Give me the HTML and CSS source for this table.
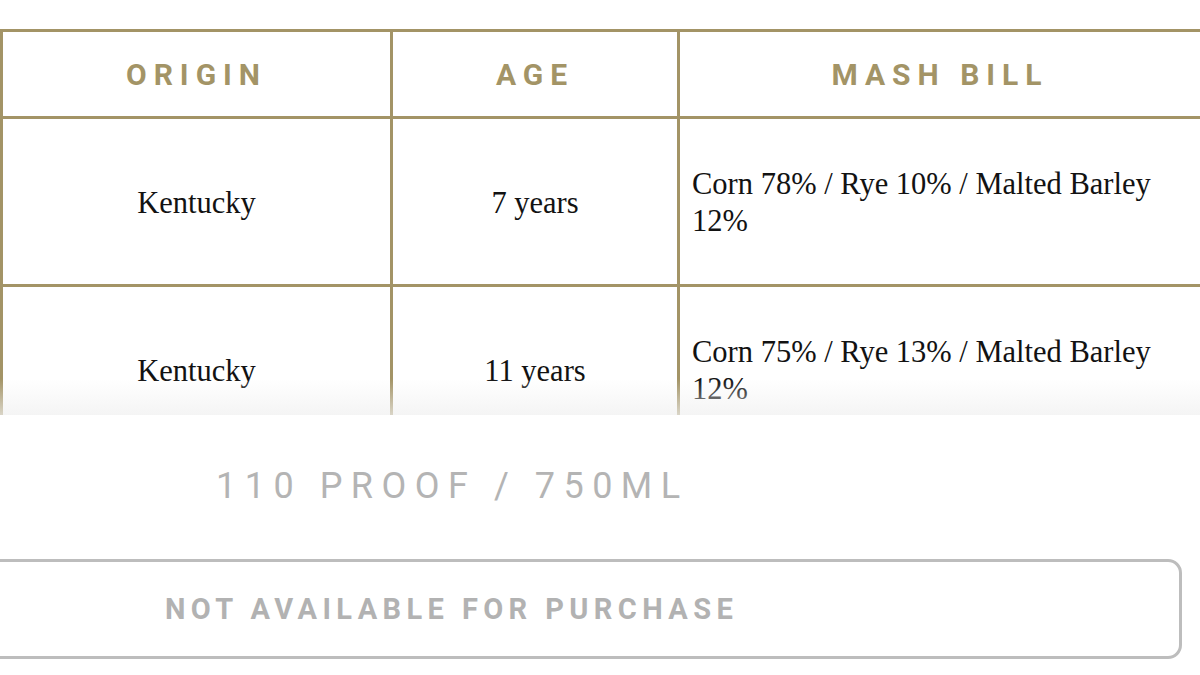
FILE: index.html
```html
<!DOCTYPE html>
<html lang="en">
<head>
<meta charset="utf-8">
<title>Bourbon details</title>
<link rel="stylesheet" href="styles.css">
</head>
<body>
<main class="page">
  <section class="table-wrap">
    <div class="spec-grid">
      <div class="cell head">ORIGIN</div>
      <div class="cell head">AGE</div>
      <div class="cell head">MASH BILL</div>

      <div class="cell">Kentucky</div>
      <div class="cell">7 years</div>
      <div class="cell left">Corn 78% / Rye 10% / Malted Barley 12%</div>

      <div class="cell">Kentucky</div>
      <div class="cell">11 years</div>
      <div class="cell left">Corn 75% / Rye 13% / Malted Barley 12%</div>
    </div>
    <div class="fade"></div>
  </section>

  <p class="proof">110 PROOF / 750ML</p>

  <div class="buy-btn">NOT AVAILABLE FOR PURCHASE</div>
</main>
</body>
</html>
```

FILE: styles.css
```css
html, body {
  margin: 0;
  padding: 0;
  background: #ffffff;
  overflow: hidden;
}

.page {
  width: 1200px;
  height: 675px;
  overflow: hidden;
}

.table-wrap {
  position: relative;
  margin-top: 29px;
  height: 386px;
  overflow: hidden;
}

.spec-grid {
  display: grid;
  grid-template-columns: 387px 284px 520px;
  grid-template-rows: 84px 165px 165px;
  gap: 3px;
  padding: 3px;
  width: max-content;
  background: #a39466;
}

.cell {
  background: #ffffff;
  display: flex;
  align-items: center;
  justify-content: center;
  text-align: center;
  padding-top: 3px;
  font-family: "Liberation Serif", "Times New Roman", serif;
  font-size: 30.5px;
  line-height: 37px;
  color: #121212;
}

.cell.left {
  justify-content: flex-start;
  text-align: left;
  padding: 3px 20px 0 12px;
}

.cell.head {
  padding-top: 0;
  font-family: "Roboto", "Liberation Sans", sans-serif;
  font-weight: 700;
  font-size: 30px;
  letter-spacing: 7px;
  color: #a39466;
}

.fade {
  position: absolute;
  left: 0;
  right: 0;
  bottom: 0;
  height: 36px;
  background: linear-gradient(to bottom, rgba(240, 240, 240, 0), rgba(240, 240, 240, 0.7));
  pointer-events: none;
}

.proof {
  margin: 53px 0 0 0;
  padding-left: 216px;
  font-family: "Roboto", "Liberation Sans", sans-serif;
  font-weight: 400;
  font-size: 36px;
  line-height: 36px;
  letter-spacing: 8.5px;
  color: #b4b4b4;
}

.buy-btn {
  margin: 55px 18px 0 -20px;
  height: 94px;
  border: 3px solid #bdbdbd;
  border-radius: 14px;
  display: flex;
  align-items: center;
  padding-left: 182px;
  font-family: "Roboto", "Liberation Sans", sans-serif;
  font-weight: 700;
  font-size: 29px;
  letter-spacing: 5.4px;
  color: #b2b2b2;
}
```
